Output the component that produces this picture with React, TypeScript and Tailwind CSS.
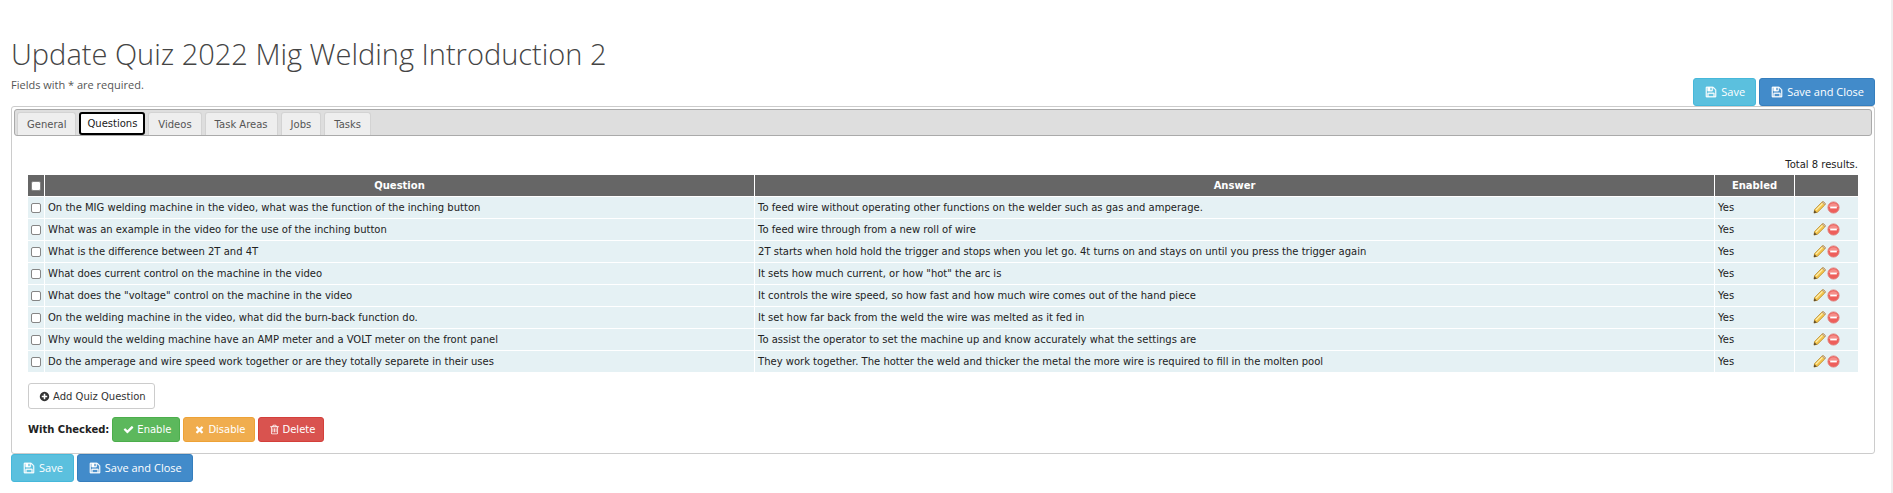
import type { ReactNode } from 'react';

const ICONS = {
  save: 'M512 1536h768v-384h-768v384zm896 0h128v-896q0-14-10-38.5t-20-34.5l-281-281q-10-10-34-20t-39-10v416q0 40-28 68t-68 28h-576q-40 0-68-28t-28-68v-416h-128v1280h128v-416q0-40 28-68t68-28h832q40 0 68 28t28 68v416zm-384-928v-320q0-13-9.5-22.5t-22.5-9.5h-192q-13 0-22.5 9.5t-9.5 22.5v320q0 13 9.5 22.5t22.5 9.5h192q13 0 22.5-9.5t9.5-22.5zm640 32v928q0 40-28 68t-68 28h-1344q-40 0-68-28t-28-68v-1344q0-40 28-68t68-28h928q40 0 88 20t76 48l280 280q28 28 48 76t20 88z',
  plus: 'M1344 960v-128q0-26-19-45t-45-19h-256v-256q0-26-19-45t-45-19h-128q-26 0-45 19t-19 45v256h-256q-26 0-45 19t-19 45v128q0 26 19 45t45 19h256v256q0 26 19 45t45 19h128q26 0 45-19t19-45v-256h256q26 0 45-19t19-45zm320-64q0 209-103 385.5t-279.5 279.5-385.5 103-385.5-103-279.5-279.5-103-385.5 103-385.5 279.5-279.5 385.5-103 385.5 103 279.5 279.5 103 385.5z',
  check:
    'M1671 566q0 40-28 68l-724 724-136 136q-28 28-68 28t-68-28l-136-136-362-362q-28-28-28-68t28-68l136-136q28-28 68-28t68 28l294 295 656-657q28-28 68-28t68 28l136 136q28 28 28 68z',
  times:
    'M1490 1322q0 40-28 68l-136 136q-28 28-68 28t-68-28l-294-294-294 294q-28 28-68 28t-68-28l-136-136q-28-28-28-68t28-68l294-294-294-294q-28-28-28-68t28-68l136-136q28-28 68-28t68 28l294 294 294-294q28-28 68-28t68 28l136 136q28 28 28 68t-28 68l-294 294 294 294q28 28 28 68z',
  trash:
    'M704 736v576q0 14-9 23t-23 9h-64q-14 0-23-9t-9-23v-576q0-14 9-23t23-9h64q14 0 23 9t9 23zm256 0v576q0 14-9 23t-23 9h-64q-14 0-23-9t-9-23v-576q0-14 9-23t23-9h64q14 0 23 9t9 23zm256 0v576q0 14-9 23t-23 9h-64q-14 0-23-9t-9-23v-576q0-14 9-23t23-9h64q14 0 23 9t9 23zm128 724v-948h-896v948q0 22 7 40.5t14.5 27 10.5 8.5h832q3 0 10.5-8.5t14.5-27 7-40.5zm-672-1076h448l-48-117q-7-9-17-11h-317q-10 2-17 11zm928 32v64q0 14-9 23t-23 9h-96v948q0 83-47 143.5t-113 60.5h-832q-66 0-113-58.5t-47-141.5v-952h-96q-14 0-23-9t-9-23v-64q0-14 9-23t23-9h309l70-167q15-37 54-63t79-26h320q40 0 79 26t54 63l70 167h309q14 0 23 9t9 23z',
};

function Icon({ name, className }: { name: keyof typeof ICONS; className: string }) {
  return (
    <svg viewBox="0 0 1792 1792" className={className} fill="currentColor" aria-hidden="true">
      <path d={ICONS[name]} />
    </svg>
  );
}

function Pencil() {
  return (
    <svg viewBox="0 0 13 13" className="size-[13px]" aria-hidden="true">
      <path d="M1 12 L1.6 8.6 L8.8 1.2 Q9.6 0.5 10.6 0.9 L12 2.2 Q12.5 3 11.8 4 L4.6 11.2 Z" fill="#f3c54c" stroke="#b98a2c" strokeWidth="0.8" />
      <path d="M3 9 L9.6 2.4" stroke="#fdeeb0" strokeWidth="1.3" />
      <path d="M9 1.2 Q10 0.4 11 1 L12.2 2.2 Q12.6 3 11.9 3.8 Z" fill="#dfc3a0" stroke="#a58a68" strokeWidth="0.5" />
      <path d="M0.8 12.3 L1.4 9.2 L3.8 11.6 Z" fill="#5b4a2c" />
    </svg>
  );
}

function Remove() {
  return (
    <svg viewBox="0 0 13 13" className="size-[13px]" aria-hidden="true">
      <circle cx="6.5" cy="6.5" r="5.6" fill="#ee5f5b" stroke="#e0807c" strokeWidth="0.9" />
      <path d="M1.8 6 A4.8 4.8 0 0 1 11.2 6 Z" fill="#f58f8a" />
      <rect x="3.2" y="5.6" width="6.6" height="1.8" fill="#fff" />
    </svg>
  );
}

function SaveButtons() {
  const base =
    'flex h-7 items-center gap-1 rounded-[3px] border pl-[11px] pr-[10px] font-["Open_Sans",sans-serif] text-[11px] text-white';
  return (
    <div className="flex gap-[3px]">
      <button type="button" className={`${base} border-[#46b8da] bg-[#5bc0de]`}>
        <Icon name="save" className="size-3 stroke-current stroke-[50]" />
        Save
      </button>
      <button type="button" className={`${base} border-[#357ebd] bg-[#428bca]`}>
        <Icon name="save" className="size-3 stroke-current stroke-[50]" />
        Save and Close
      </button>
    </div>
  );
}

function SmallButton({ icon, className, children }: { icon: keyof typeof ICONS; className: string; children: ReactNode }) {
  return (
    <button type="button" className={`flex items-center gap-[3px] rounded-[3px] border pl-[10px] pr-2 text-[10px] ${className}`}>
      <Icon name={icon} className="size-[11px]" />
      {children}
    </button>
  );
}

const TABS = ['General', 'Questions', 'Videos', 'Task Areas', 'Jobs', 'Tasks'];

const ROWS = [
  ['On the MIG welding machine in the video, what was the function of the inching button', 'To feed wire without operating other functions on the welder such as gas and amperage.'],
  ['What was an example in the video for the use of the inching button', 'To feed wire through from a new roll of wire'],
  ['What is the difference between 2T and 4T', '2T starts when hold hold the trigger and stops when you let go. 4t turns on and stays on until you press the trigger again'],
  ['What does current control on the machine in the video', 'It sets how much current, or how "hot" the arc is'],
  ['What does the "voltage" control on the machine in the video', 'It controls the wire speed, so how fast and how much wire comes out of the hand piece'],
  ['On the welding machine in the video, what did the burn-back function do.', 'It set how far back from the weld the wire was melted as it fed in'],
  ['Why would the welding machine have an AMP meter and a VOLT meter on the front panel', 'To assist the operator to set the machine up and know accurately what the settings are'],
  ['Do the amperage and wire speed work together or are they totally separete in their uses', 'They work together. The hotter the weld and thicker the metal the more wire is required to fill in the molten pool'],
];

const CHECKBOX = 'block size-[10px] appearance-none rounded-[2px] border border-[#858585] bg-white checked:bg-[#0075ff]';

export default function App() {
  return (
    <div className="min-h-screen border-r-2 border-[#efefef] bg-white pt-[30px] pr-4 pb-2 pl-[11px] font-['DejaVu_Sans',sans-serif] text-[10px] text-[#222]">
      <h1 className="font-['Open_Sans',sans-serif] text-[29px] leading-[48px] font-light text-[#444]">
        Update Quiz 2022 Mig Welding Introduction 2
      </h1>
      <div className="flex items-start justify-between">
        <p className="font-['Open_Sans',sans-serif] text-[11px] leading-[14px] text-[#555]">Fields with * are required.</p>
        <SaveButtons />
      </div>

      <main className="rounded-[3px] border border-[#ccc] p-[2px]">
        <div role="tablist" className="flex h-[27px] items-end gap-[3px] rounded-[3px] border border-[#aaa] bg-[#dedede] px-[2px]">
          {TABS.map((tab) => (
            <button
              key={tab}
              type="button"
              role="tab"
              aria-selected={tab === 'Questions'}
              className={
                tab === 'Questions'
                  ? 'h-[23px] rounded-[3px] border-2 border-black bg-white px-[6px] text-[#212121]'
                  : 'h-[23px] rounded-t-[3px] border border-b-0 border-[#d3d3d3] bg-[#eee] px-[9px] text-[#555]'
              }
            >
              {tab}
            </button>
          ))}
        </div>

        <div className="px-[14px] pt-[22px] pb-[9px]">
          <p className="pb-[3px] text-right leading-[14px]">Total 8 results.</p>
          <table className="w-full table-fixed border-separate border-spacing-0">
            <colgroup>
              <col className="w-4" />
              <col className="w-[38.8%]" />
              <col />
              <col className="w-20" />
              <col className="w-16" />
            </colgroup>
            <thead>
              <tr className="h-[22px] bg-[#666] text-white">
                <th className="border-b border-white pl-[3px]">
                  <input type="checkbox" aria-label="Select all questions" className={CHECKBOX} />
                </th>
                <th className="border-b border-l border-white">Question</th>
                <th className="border-b border-l border-white">Answer</th>
                <th className="border-b border-l border-white">Enabled</th>
                <th className="border-b border-l border-white" aria-label="Actions" />
              </tr>
            </thead>
            <tbody>
              {ROWS.map(([question, answer]) => (
                <tr key={question} className="h-[22px] bg-[#e5f1f4] last:h-[21px] last:*:border-b-0">
                  <td className="border-b border-white pl-[3px]">
                    <input type="checkbox" aria-label={question} className={CHECKBOX} />
                  </td>
                  <td className="border-b border-l border-white px-[3px]">{question}</td>
                  <td className="border-b border-l border-white px-[3px]">{answer}</td>
                  <td className="border-b border-l border-white px-[3px]">Yes</td>
                  <td className="border-b border-l border-white">
                    <div className="flex justify-center gap-px">
                      <button type="button" aria-label="Update">
                        <Pencil />
                      </button>
                      <button type="button" aria-label="Delete">
                        <Remove />
                      </button>
                    </div>
                  </td>
                </tr>
              ))}
            </tbody>
          </table>
          <div className="flex pt-[11px]">
            <SmallButton icon="plus" className="h-[26px] border-[#ccc] bg-white text-[#333]">
              Add Quiz Question
            </SmallButton>
          </div>
          <div className="flex items-center gap-[3px] pt-2">
            <span className="font-bold">With Checked:</span>
            <SmallButton icon="check" className="h-[25px] border-[#4cae4c] bg-[#5cb85c] text-white">
              Enable
            </SmallButton>
            <SmallButton icon="times" className="h-[25px] border-[#eea236] bg-[#f0ad4e] text-white">
              Disable
            </SmallButton>
            <SmallButton icon="trash" className="h-[25px] border-[#d43f3a] bg-[#d9534f] text-white">
              Delete
            </SmallButton>
          </div>
        </div>
      </main>
      <SaveButtons />
    </div>
  );
}
